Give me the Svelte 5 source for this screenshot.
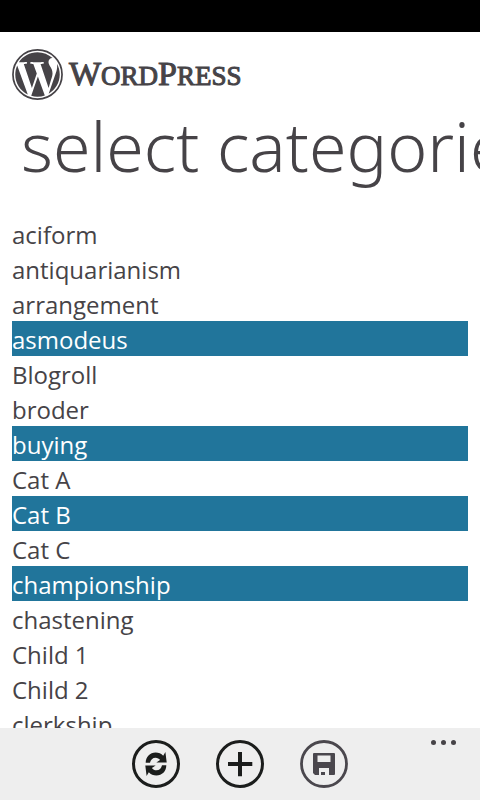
<script lang="ts">
  let categories = $state([
    { name: 'aciform', selected: false },
    { name: 'antiquarianism', selected: false },
    { name: 'arrangement', selected: false },
    { name: 'asmodeus', selected: true },
    { name: 'Blogroll', selected: false },
    { name: 'broder', selected: false },
    { name: 'buying', selected: true },
    { name: 'Cat A', selected: false },
    { name: 'Cat B', selected: true },
    { name: 'Cat C', selected: false },
    { name: 'championship', selected: true },
    { name: 'chastening', selected: false },
    { name: 'Child 1', selected: false },
    { name: 'Child 2', selected: false },
    { name: 'clerkship', selected: false },
  ]);
</script>

{#snippet arrow()}
  <path
    d="M13.7 22.8c0-6 4.3-10.3 9.900-10.300 3 0 5.600 1.100 7.600 3.200l2.200-3.700 1.300 10.400H24.300l3.800-2.300c-1.200-1.400-2.600-2.300-4.500-2.300-3 0-5 2-5.600 5z"
  />
{/snippet}

<div class="page">
  <div class="system-tray"></div>

  <header class="header">
    <div class="brand">
      <svg class="brand__mark" viewBox="0 0 24 24" aria-hidden="true">
        <circle cx="12" cy="12" r="11.55" fill="none" stroke="currentColor" stroke-width="0.8" />
        <path
          fill="currentColor"
          transform="translate(12 12) scale(0.97) translate(-12 -12)"
          d="M21.469 6.825c.84 1.537 1.318 3.3 1.318 5.175 0 3.979-2.156 7.456-5.363 9.325l3.295-9.527c.615-1.54.82-2.771.82-3.864 0-.405-.026-.78-.07-1.11m-7.981.105c.647-.03 1.232-.105 1.232-.105.582-.075.514-.93-.067-.899 0 0-1.755.135-2.88.135-1.064 0-2.85-.15-2.85-.15-.585-.03-.661.855-.075.885 0 0 .54.061 1.125.09l1.68 4.605-2.37 7.08L5.354 6.9c.649-.03 1.234-.1 1.234-.1.585-.075.516-.93-.065-.896 0 0-1.746.138-2.874.138-.2 0-.438-.008-.69-.015C4.911 3.15 8.235 1.215 12 1.215c2.809 0 5.365 1.072 7.286 2.833-.046-.003-.091-.009-.141-.009-1.06 0-1.812.923-1.812 1.914 0 .89.513 1.643 1.06 2.531.411.72.89 1.643.89 2.977 0 .915-.354 1.994-.821 3.479l-1.075 3.585-3.9-11.61zM12 22.784c-1.059 0-2.081-.153-3.048-.437l3.237-9.406 3.315 9.087c.024.053.05.101.078.149-1.12.393-2.325.609-3.582.609M1.211 12c0-1.564.336-3.05.935-4.39L7.29 21.709C3.694 19.96 1.212 16.271 1.211 12"
        />
      </svg>
      <span class="brand__name"><b>W</b>ORD<b>P</b>RESS</span>
    </div>
    <h1 class="title">select categories</h1>
  </header>

  <ul class="categories">
    {#each categories as category (category.name)}
      <li>
        <button
          type="button"
          class="category"
          class:category--selected={category.selected}
          aria-pressed={category.selected}
          onclick={() => (category.selected = !category.selected)}
        >
          {category.name}
        </button>
      </li>
    {/each}
  </ul>

  <footer class="app-bar">
    <button type="button" class="app-bar__button" aria-label="refresh">
      <svg viewBox="0 0 48 48" aria-hidden="true">
        <circle cx="24" cy="24" r="22.5" fill="none" stroke="currentColor" stroke-width="3" />
        <g fill="currentColor">{@render arrow()}</g>
        <g fill="currentColor" transform="rotate(180 24 24)">{@render arrow()}</g>
      </svg>
    </button>
    <button type="button" class="app-bar__button" aria-label="add">
      <svg viewBox="0 0 48 48" aria-hidden="true">
        <circle cx="24" cy="24" r="22.5" fill="none" stroke="currentColor" stroke-width="3" />
        <path fill="currentColor" d="M22 12h4v10h10.3v4H26v10.3h-4V26H12v-4h10z" />
      </svg>
    </button>
    <button type="button" class="app-bar__button app-bar__button--soft" aria-label="save">
      <svg viewBox="0 0 48 48" aria-hidden="true">
        <circle cx="24" cy="24" r="22.5" fill="none" stroke="currentColor" stroke-width="2.8" />
        <path
          fill="currentColor"
          fill-rule="evenodd"
          d="M14 13h20q1 0 1 1v20q0 1-1 1H15l-2-2V14q0-1 1-1zM17.500 15.500v6.500h13v-6.500zM19 28v7h2v-3h4v3h4v-7z"
        />
      </svg>
    </button>
    <button type="button" class="more" aria-label="more">
      <i></i><i></i><i></i>
    </button>
  </footer>
</div>

<style>
  :global(body) {
    background: #fff;
  }

  .page {
    display: flex;
    flex-direction: column;
    height: 100vh;
    overflow: hidden;
    color: #464347;
    font-family: 'Open Sans', 'Noto Sans', sans-serif;
  }

  .system-tray {
    flex: none;
    height: 32px;
    background: #000;
  }

  .header {
    flex: none;
    padding: 16px 0 0 12px;
  }

  .brand {
    display: flex;
    align-items: center;
    gap: 6px;
    height: 52px;
  }

  .brand__mark {
    width: 51px;
    height: 51px;
  }

  .brand__name {
    padding-top: 2px;
    font-family: 'Liberation Serif', serif;
    font-size: 27px;
    line-height: 40px;
    -webkit-text-stroke: 1px currentColor;
  }

  .brand__name b {
    font-size: 34px;
    font-weight: 400;
  }

  .title {
    margin: 0;
    padding-left: 9px;
    overflow: hidden;
    font-family: 'Noto Sans', 'Open Sans', sans-serif;
    font-size: 68px;
    font-weight: 300;
    line-height: 92px;
    white-space: nowrap;
  }

  .categories {
    flex: 1;
    min-height: 0;
    margin: 24px 12px 0;
    padding: 0;
    overflow-y: auto;
    list-style: none;
    scrollbar-width: none;
  }

  .category {
    display: block;
    width: 100%;
    padding: 3px 0 0;
    border: 0;
    background: none;
    color: inherit;
    font-family: inherit;
    font-size: 24px;
    line-height: 32px;
    text-align: left;
    cursor: pointer;
  }

  .category--selected {
    background: #21759b;
    color: #fff;
  }

  .app-bar {
    position: relative;
    display: flex;
    flex: none;
    justify-content: center;
    gap: 36px;
    padding: 12px 0;
    background: #eee;
  }

  .app-bar__button {
    width: 48px;
    height: 48px;
    padding: 0;
    border: 0;
    background: none;
    color: #1b1d1c;
    cursor: pointer;
  }

  .app-bar__button--soft {
    color: #4a474d;
  }

  .app-bar__button svg {
    display: block;
  }

  .more {
    position: absolute;
    top: 0;
    right: 12px;
    display: flex;
    gap: 5px;
    padding: 12px;
    border: 0;
    background: none;
    cursor: pointer;
  }

  .more i {
    width: 5px;
    height: 5px;
    border-radius: 50%;
    background: #464347;
  }
</style>
